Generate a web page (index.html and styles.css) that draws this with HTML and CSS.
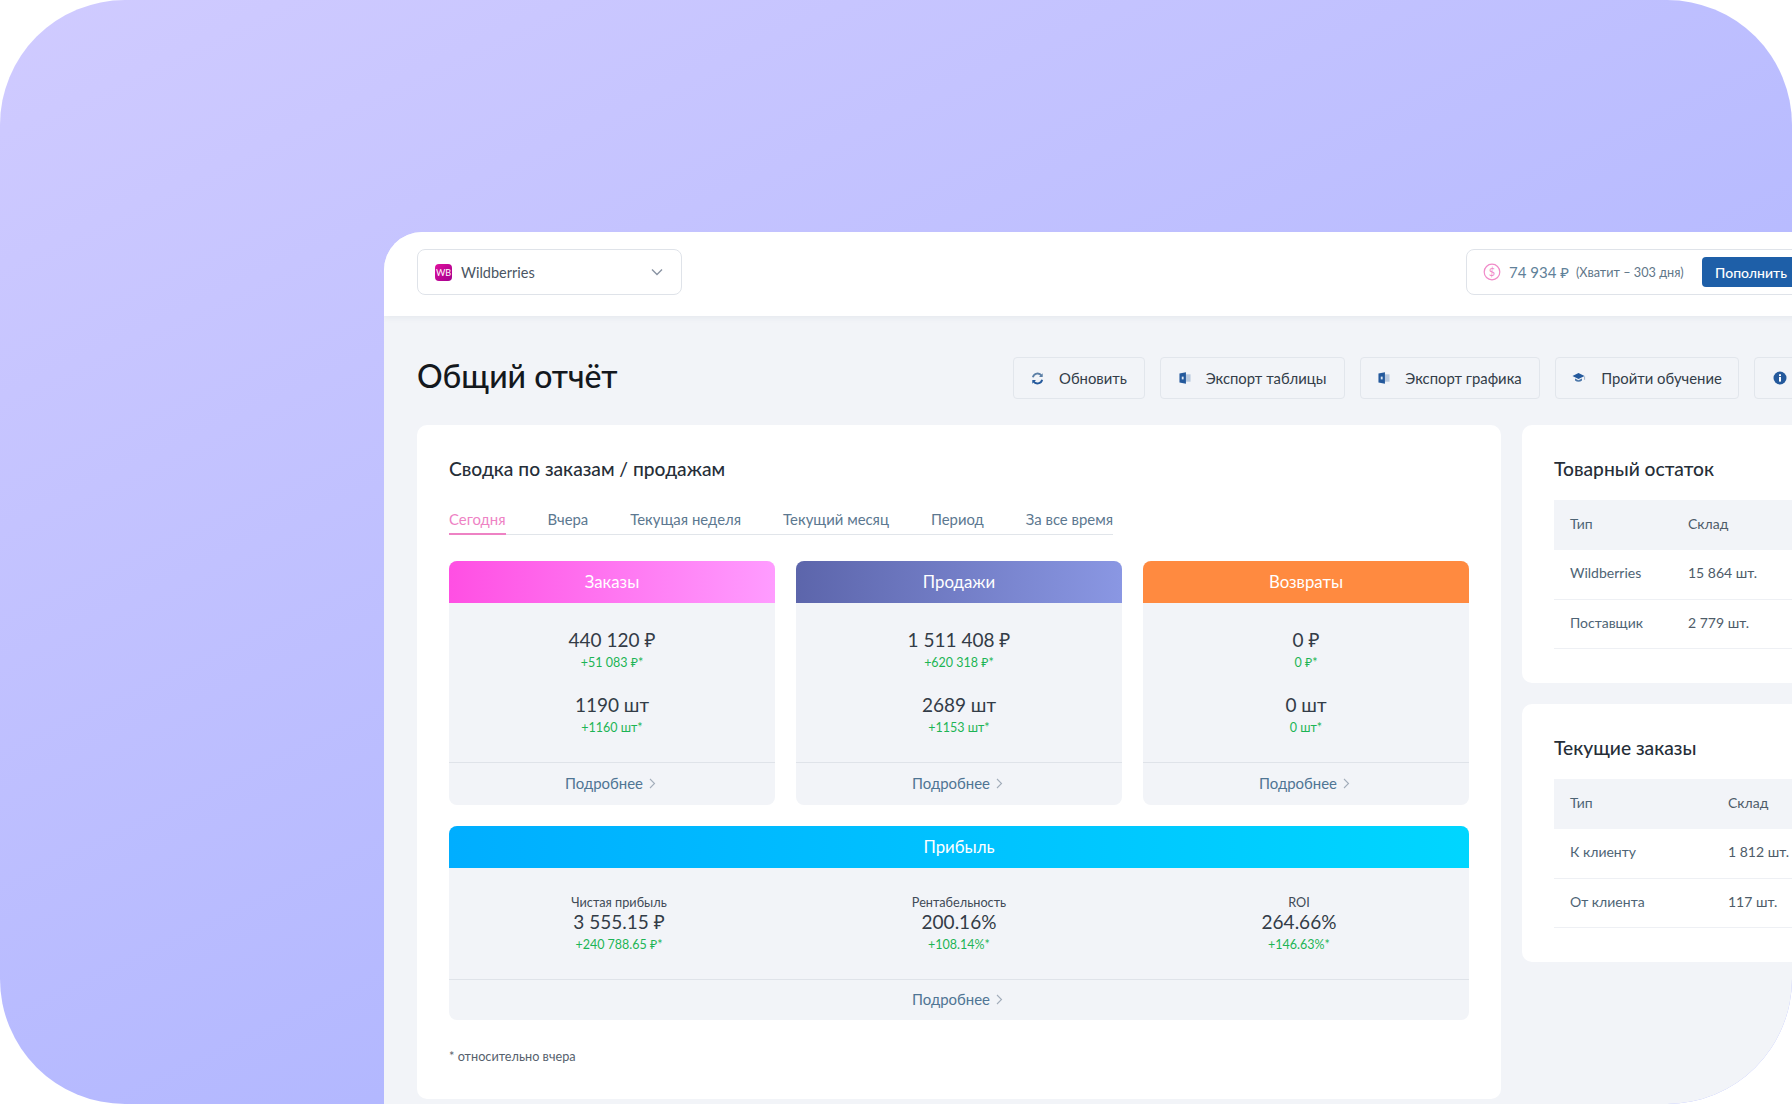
FILE: index.html
```html
<!DOCTYPE html>
<html lang="ru">
<head>
	<meta charset="UTF-8">
	<title>Общий отчёт</title>
	<link rel="stylesheet" href="styles.css">
</head>
<body>
<div class="stage">
	<div class="app">
		<header class="topbar">
			<div class="shop-select">
				<span class="wb-logo">WB</span>
				<span class="shop-name">Wildberries</span>
				<svg class="shop-arrow" width="12" height="8" viewBox="0 0 12 8"><path d="M1 1.5l5 5 5-5" fill="none" stroke="#8a94a3" stroke-width="1.4"/></svg>
			</div>
			<div class="balance">
				<svg class="balance-icon" width="18" height="18" viewBox="0 0 18 18"><circle cx="9" cy="9" r="7.8" fill="none" stroke="#f08ac8" stroke-width="1.2"/><text x="9" y="12.8" text-anchor="middle" class="balance-sign">$</text></svg>
				<span class="balance-sum">74 934 ₽</span>
				<span class="balance-note">(Хватит – 303 дня)</span>
				<button class="btn-fill">Пополнить</button>
			</div>
		</header>

		<main class="content">
			<div class="toolbar">
				<h1 class="page-title">Общий отчёт</h1>
				<div class="actions">
					<a class="action action-refresh">
						<svg width="13" height="13" viewBox="0 0 14 14"><path d="M2 5.6A5.2 5.2 0 0 1 11.4 4" fill="none" stroke="#5b7fa6" stroke-width="2"/><path d="M12 8.4A5.2 5.2 0 0 1 2.6 10" fill="none" stroke="#24599c" stroke-width="2"/><path d="M12.6 1.4v4h-4z" fill="#5b7fa6"/><path d="M1.4 12.6v-4h4z" fill="#24599c"/></svg>
						Обновить
					</a>
					<a class="action action-table">
						<svg width="12" height="12" viewBox="0 0 13 13"><rect x="6" y="2.5" width="6.5" height="8" fill="#b9c9de"/><path d="M0.5 1.6L7.5 0.3v12.4l-7-1.3z" fill="#24599c"/><rect x="3" y="5" width="2" height="3" fill="#dbe6f3"/></svg>
						Экспорт таблицы
					</a>
					<a class="action action-chart">
						<svg width="12" height="12" viewBox="0 0 13 13"><rect x="6" y="2.5" width="6.5" height="8" fill="#b9c9de"/><path d="M0.5 1.6L7.5 0.3v12.4l-7-1.3z" fill="#24599c"/><rect x="3" y="5" width="2" height="3" fill="#dbe6f3"/></svg>
						Экспорт графика
					</a>
					<a class="action action-learn">
						<svg width="14" height="12" viewBox="0 0 14 12"><path d="M0.5 4L6.5 1l6 3-6 3z" fill="#24599c"/><path d="M3 6.4v2.2c2 1.6 5 1.6 7 0V6.4L6.5 8.2z" fill="#4d78aa"/><path d="M12.6 4.4v3.4" stroke="#9db2cc" stroke-width="1"/></svg>
						Пройти обучение
					</a>
					<a class="action action-info">
						<svg width="14" height="14" viewBox="0 0 14 14"><circle cx="7" cy="7" r="6.5" fill="#24599c"/><rect x="6" y="6" width="2" height="4.6" fill="#fff"/><rect x="6" y="3.3" width="2" height="1.8" fill="#fff"/></svg>
					</a>
				</div>
			</div>

			<div class="columns">
				<section class="panel summary">
					<h2 class="panel-title">Сводка по заказам / продажам</h2>
					<ul class="tabs">
						<li class="active">Сегодня</li>
						<li>Вчера</li>
						<li>Текущая неделя</li>
						<li>Текущий месяц</li>
						<li>Период</li>
						<li>За все время</li>
					</ul>

					<div class="stat-grid">
						<div class="stat">
							<div class="stat-head head-orders">Заказы</div>
							<div class="stat-body">
								<div class="value">440 120 ₽</div>
								<div class="delta">+51 083 ₽*</div>
								<div class="value value-next">1190 шт</div>
								<div class="delta">+1160 шт*</div>
							</div>
							<a class="more">Подробнее <svg width="7" height="11" viewBox="0 0 7 11"><path d="M1 1l4.5 4.5L1 10" fill="none" stroke="#a3aebb" stroke-width="1.1"/></svg></a>
						</div>
						<div class="stat">
							<div class="stat-head head-sales">Продажи</div>
							<div class="stat-body">
								<div class="value">1 511 408 ₽</div>
								<div class="delta">+620 318 ₽*</div>
								<div class="value value-next">2689 шт</div>
								<div class="delta">+1153 шт*</div>
							</div>
							<a class="more">Подробнее <svg width="7" height="11" viewBox="0 0 7 11"><path d="M1 1l4.5 4.5L1 10" fill="none" stroke="#a3aebb" stroke-width="1.1"/></svg></a>
						</div>
						<div class="stat">
							<div class="stat-head head-returns">Возвраты</div>
							<div class="stat-body">
								<div class="value">0 ₽</div>
								<div class="delta">0 ₽*</div>
								<div class="value value-next">0 шт</div>
								<div class="delta">0 шт*</div>
							</div>
							<a class="more">Подробнее <svg width="7" height="11" viewBox="0 0 7 11"><path d="M1 1l4.5 4.5L1 10" fill="none" stroke="#a3aebb" stroke-width="1.1"/></svg></a>
						</div>
					</div>

					<div class="stat stat-wide">
						<div class="stat-head head-profit">Прибыль</div>
						<div class="profit-body">
							<div>
								<div class="label">Чистая прибыль</div>
								<div class="value value-tight">3 555.15 ₽</div>
								<div class="delta">+240 788.65 ₽*</div>
							</div>
							<div>
								<div class="label">Рентабельность</div>
								<div class="value value-tight">200.16%</div>
								<div class="delta">+108.14%*</div>
							</div>
							<div>
								<div class="label">ROI</div>
								<div class="value value-tight">264.66%</div>
								<div class="delta">+146.63%*</div>
							</div>
						</div>
						<a class="more more-wide">Подробнее <svg width="7" height="11" viewBox="0 0 7 11"><path d="M1 1l4.5 4.5L1 10" fill="none" stroke="#a3aebb" stroke-width="1.1"/></svg></a>
					</div>

					<p class="footnote">* относительно вчера</p>
				</section>

				<aside class="side">
					<section class="panel side-panel">
						<h2 class="panel-title">Товарный остаток</h2>
						<table class="mini-table table-stock">
							<tr><th>Тип</th><th>Склад</th></tr>
							<tr><td>Wildberries</td><td>15 864 шт.</td></tr>
							<tr><td>Поставщик</td><td>2 779 шт.</td></tr>
						</table>
					</section>
					<section class="panel side-panel">
						<h2 class="panel-title">Текущие заказы</h2>
						<table class="mini-table table-orders">
							<tr><th>Тип</th><th>Склад</th></tr>
							<tr><td>К клиенту</td><td>1 812 шт.</td></tr>
							<tr><td>От клиента</td><td>117 шт.</td></tr>
						</table>
					</section>
				</aside>
			</div>
		</main>
	</div>
</div>
</body>
</html>
```

FILE: styles.css
```css
* {
	margin: 0;
	padding: 0;
	box-sizing: border-box;
}
html, body {
	background: #fff;
	overflow: hidden;
}
body {
	font-family: Lato, "Noto Sans", sans-serif;
	color: #2a3440;
}
.stage {
	display: flex;
	width: 1792px;
	height: 1104px;
	padding: 232px 0 0 384px;
	border-radius: 125px;
	overflow: hidden;
	background: linear-gradient(155deg, #d0cbff 0%, #a4aeff 100%);
}
.app {
	flex: none;
	width: 1530px;
	display: flex;
	flex-direction: column;
	border-top-left-radius: 38px;
	overflow: hidden;
	background: #f2f4f8;
}

/* top bar */
.topbar {
	flex: none;
	height: 84px;
	padding: 17px 108px 0 33px;
	display: flex;
	justify-content: space-between;
	align-items: flex-start;
	background: #fff;
	box-shadow: 0 2px 6px rgba(40, 60, 90, 0.06);
}
.shop-select {
	width: 265px;
	height: 46px;
	padding: 0 18px 0 17px;
	display: flex;
	align-items: center;
	border: 1px solid #dfe3e9;
	border-radius: 8px;
}
.wb-logo {
	width: 17px;
	height: 17px;
	border-radius: 4px;
	background: linear-gradient(135deg, #e0109c, #a3008f);
	color: #fff;
	font-size: 9px;
	line-height: 17px;
	text-align: center;
}
.shop-name {
	margin-left: 9px;
	font-size: 14.5px;
	color: #4a5562;
}
.shop-arrow {
	margin-left: auto;
}
.balance {
	width: 340px;
	height: 46px;
	padding: 0 5px 0 16px;
	display: flex;
	align-items: center;
	border: 1px solid #dfe3e9;
	border-radius: 8px;
}
.balance-sign {
	font-size: 11px;
	fill: #f08ac8;
}
.balance-sum {
	margin-left: 8px;
	font-size: 15px;
	color: #5f8199;
}
.balance-note {
	margin-left: 7px;
	font-size: 12.7px;
	color: #5f7688;
}
.btn-fill {
	margin-left: auto;
	width: 98px;
	height: 30px;
	border: 0;
	border-radius: 4px;
	background: #1e5fa8;
	color: #fff;
	font-family: inherit;
	font-size: 14px;
	font-weight: 500;
}

/* title row */
.content {
	padding: 41px 33px 0;
}
.toolbar {
	display: flex;
	justify-content: space-between;
	height: 42px;
	margin-bottom: 26px;
	padding-right: 75px;
}
.page-title {
	font-size: 32px;
	font-weight: 500;
	line-height: 38px;
	color: #14181d;
}
.actions {
	display: flex;
	gap: 15px;
}
.action {
	height: 42px;
	display: flex;
	align-items: center;
	justify-content: center;
	gap: 15px;
	border: 1px solid #e2e6ec;
	border-radius: 4px;
	font-size: 14.85px;
	color: #333d49;
}
.action-refresh { width: 132px; }
.action-table { width: 185px; }
.action-chart { width: 180px; }
.action-learn { width: 184px; }
.action-info { width: 52px; }

/* panels */
.columns {
	display: grid;
	grid-template-columns: 1084px 1fr;
	gap: 21px;
	align-items: start;
}
.panel {
	background: #fff;
	border-radius: 10px;
}
.panel-title {
	font-size: 19.2px;
	font-weight: 500;
	line-height: 22px;
	color: #262e38;
}
.summary {
	height: 674px;
	padding: 33px 32px 0;
}
.tabs {
	display: inline-flex;
	gap: 42px;
	margin-top: 28px;
	list-style: none;
	border-bottom: 1px solid #e1e5ea;
	font-size: 14.9px;
	line-height: 22px;
	color: #5c7890;
}
.tabs li {
	padding-bottom: 3px;
}
.tabs .active {
	color: #ee82c4;
	border-bottom: 2px solid #ee82c4;
	margin-bottom: -1px;
}

/* colored cards */
.stat-grid {
	display: grid;
	grid-template-columns: repeat(3, 1fr);
	gap: 21px;
	margin-top: 26px;
}
.stat {
	overflow: hidden;
	border-radius: 8px;
	background: #f2f4f8;
	text-align: center;
}
.stat-wide {
	margin-top: 21px;
}
.stat-head {
	height: 42px;
	color: #fff;
	font-size: 16.8px;
	line-height: 42px;
}
.head-orders { background: linear-gradient(90deg, #ff4fe3, #ff9cff); }
.head-sales { background: linear-gradient(90deg, #5c65ab, #8a97e3); }
.head-returns { background: #ff8a40; }
.head-profit { background: linear-gradient(90deg, #00aeff, #00d6ff); }
.stat-body {
	height: 159px;
	padding-top: 23px;
}
.value {
	font-size: 19px;
	line-height: 28px;
	color: #333c47;
}
.value-next {
	margin-top: 19px;
}
.value-tight {
	margin: 1px 0 3px;
	line-height: 22px;
}
.delta {
	font-size: 12.5px;
	line-height: 18px;
	color: #1db455;
}
.label {
	font-size: 12.7px;
	line-height: 16px;
	color: #414b57;
}
.more {
	height: 43px;
	padding: 0 3px 2px 0;
	display: flex;
	align-items: center;
	justify-content: center;
	gap: 6px;
	border-top: 1px solid #dfe3e9;
	font-size: 14.95px;
	color: #4f7594;
}
.more-wide {
	height: 41px;
}
.profit-body {
	height: 111px;
	padding-top: 26px;
	display: grid;
	grid-template-columns: repeat(3, 1fr);
}
.footnote {
	margin-top: 27px;
	font-size: 12.7px;
	line-height: 18px;
	color: #56616d;
}

/* right column */
.side {
	display: flex;
	flex-direction: column;
	gap: 21px;
}
.side-panel {
	height: 258px;
	padding: 33px 32px 0;
}
.mini-table {
	width: 100%;
	margin-top: 20px;
	border-collapse: collapse;
	font-size: 14px;
	color: #4e5c69;
	white-space: nowrap;
}
.mini-table th {
	height: 50px;
	padding: 0 0 3px 16px;
	background: #f2f4f8;
	font-weight: 400;
	text-align: left;
}
.mini-table td {
	height: 49px;
	padding: 0 0 3px 16px;
	border-bottom: 1px solid #eef0f4;
}
.mini-table tr > :first-child {
	width: 118px;
	color: #4e6475;
}
.table-orders tr > :first-child {
	width: 158px;
}
```
